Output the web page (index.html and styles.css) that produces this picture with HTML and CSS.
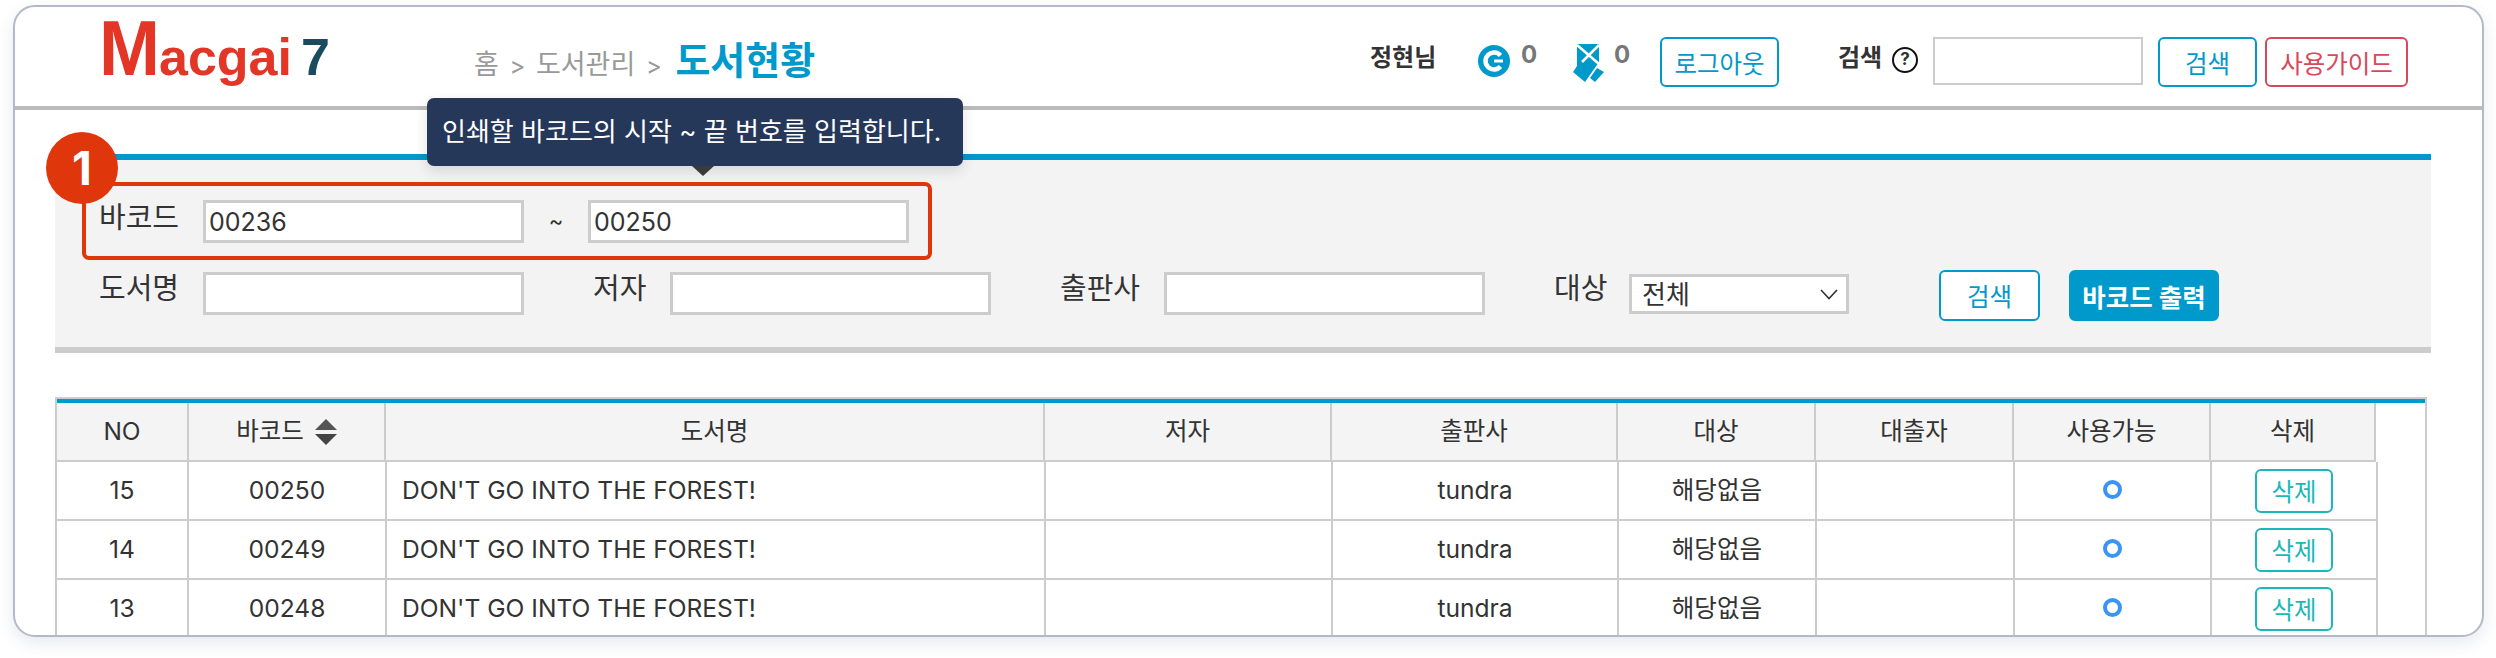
FILE: index.html
```html
<!DOCTYPE html>
<html>
<head>
    <title>도서현황</title>
    <link rel="stylesheet" href="styles.css">
</head>
<body>
    <div class="frame">
        <div class="header">
            <div class="logo"><span class="logo-m">M</span><span class="logo-rest">acgai</span><span class="logo-num">7</span></div>
            <div class="crumb">홈 <span class="gt">&gt;</span> 도서관리 <span class="gt">&gt;</span> <b>도서현황</b></div>
            <div class="user">
                <span class="user-name">정현님</span>
                <svg class="icon-g" width="32" height="32" viewBox="0 0 32 32">
                    <circle cx="16" cy="16" r="16" fill="#0099cc"/>
                    <path d="M22.5 10.5A8.5 8.5 0 1 0 22.5 21.5" fill="none" stroke="#fff" stroke-width="4.5"/>
                    <path d="M16 16H25" stroke="#fff" stroke-width="3"/>
                </svg>
                <span class="point">0</span>
                <svg class="icon-ribbon" width="31" height="38" viewBox="0 0 31 38">
                    <path d="M4 0H26V18L12 38L0 28L4 22Z" fill="#0099cc"/>
                    <path d="M17 34L24 24L31 28L22 38Z" fill="#0099cc"/>
                    <path d="M4 1L26 20M26 1L9 18" stroke="#fff" stroke-width="2.5"/>
                </svg>
                <span class="point">0</span>
                <button class="btn btn-logout">로그아웃</button>
                <span class="search-label">검색</span>
                <span class="help">?</span>
                <input type="text" class="search-input">
                <button class="btn btn-search">검색</button>
                <button class="btn btn-guide">사용가이드</button>
            </div>
        </div>

        <div class="filter">
            <div class="filter-row">
                <label class="lbl lbl-3">바코드</label>
                <input type="text" class="field" value="00236">
                <span class="tilde">~</span>
                <input type="text" class="field" value="00250">
            </div>
            <div class="filter-row filter-row2">
                <label class="lbl lbl-3">도서명</label>
                <input type="text" class="field">
                <label class="lbl lbl-2 lbl-next">저자</label>
                <input type="text" class="field">
                <label class="lbl lbl-3 lbl-next">출판사</label>
                <input type="text" class="field">
                <label class="lbl lbl-target lbl-next">대상</label>
                <select class="target"><option>전체</option></select>
                <button class="btn btn-find">검색</button>
                <button class="btn btn-print">바코드 출력</button>
            </div>
        </div>

        <div class="list">
            <table class="list-head">
                <colgroup>
                    <col class="c1"><col class="c2h"><col class="c3"><col class="c4"><col class="c5"><col class="c6"><col class="c7"><col class="c8"><col class="c9h">
                </colgroup>
                <tr>
                    <th>NO</th>
                    <th>바코드
                        <svg class="sort" width="22" height="26" viewBox="0 0 22 26">
                            <path d="M11 0L22 11H0Z" fill="#555"/>
                            <path d="M11 26L22 15H0Z" fill="#444"/>
                        </svg>
                    </th>
                    <th>도서명</th>
                    <th>저자</th>
                    <th>출판사</th>
                    <th>대상</th>
                    <th>대출자</th>
                    <th>사용가능</th>
                    <th>삭제</th>
                </tr>
            </table>
            <table class="list-body">
                <colgroup>
                    <col class="c1"><col class="c2"><col class="c3"><col class="c4"><col class="c5"><col class="c6"><col class="c7"><col class="c8"><col class="c9">
                </colgroup>
                <tr>
                    <td>15</td><td>00250</td><td class="title">DON'T GO INTO THE FOREST!</td><td></td><td>tundra</td><td>해당없음</td><td></td>
                    <td><span class="ring"></span></td><td class="del"><button class="btn btn-del">삭제</button></td>
                </tr>
                <tr>
                    <td>14</td><td>00249</td><td class="title">DON'T GO INTO THE FOREST!</td><td></td><td>tundra</td><td>해당없음</td><td></td>
                    <td><span class="ring"></span></td><td class="del"><button class="btn btn-del">삭제</button></td>
                </tr>
                <tr>
                    <td>13</td><td>00248</td><td class="title">DON'T GO INTO THE FOREST!</td><td></td><td>tundra</td><td>해당없음</td><td></td>
                    <td><span class="ring"></span></td><td class="del"><button class="btn btn-del">삭제</button></td>
                </tr>
            </table>
        </div>

        <!-- guide annotation on top of the page -->
        <div class="mark-box"></div>
        <div class="mark-num">1</div>
        <div class="tip">인쇄할 바코드의 시작 ~ 끝 번호를 입력합니다.</div>
    </div>
</body>
</html>
```

FILE: styles.css
```css
body {
    font-family: Inter, "Noto Sans CJK KR", sans-serif;
    background: #fff;
    color: #333;
    margin: 0;
    height: 658px;
    overflow: hidden;
}

.frame {
    position: relative;
    width: 2471px;
    height: 632px;
    margin: 5px 0 0 13px;
    box-sizing: border-box;
    border: 2px solid #b4b9ca;
    border-radius: 22px;
    box-shadow: 0 6px 16px rgba(60, 70, 100, 0.12);
    overflow: hidden;
    background: #fff;
}

.btn {
    font-family: Inter, "Noto Sans CJK KR", sans-serif;
    font-size: 24.5px;
    background: #fff;
    border: 2px solid #0099cc;
    border-radius: 6px;
    color: #0099cc;
    padding: 0;
    box-sizing: border-box;
    cursor: pointer;
}

/* header */
.header {
    display: flex;
    align-items: center;
    height: 99px;
    border-bottom: 4px solid #bbb;
}

.logo {
    width: 375px;
    margin-left: 84px;
    flex: none;
    display: flex;
    align-items: baseline;
    font-family: "Liberation Sans", sans-serif;
    font-weight: bold;
    color: #e33626;
    line-height: 1;
    align-self: flex-start;
    margin-top: 3px;
}

.logo-m {
    display: inline-block;
    width: 60px;
    font-size: 77px;
    transform: scaleX(0.95);
    transform-origin: left;
}

.logo-rest {
    font-size: 52px;
}

.logo-num {
    font-size: 52px;
    color: #1a4b5e;
    margin-left: 9px;
}

.crumb {
    font-size: 27px;
    color: #999;
    white-space: nowrap;
    margin-top: 2px;
}

.crumb .gt {
    font-size: 24px;
    margin: 0 3px;
}

.crumb b {
    font-size: 38px;
    color: #0099cc;
    margin-left: 3px;
}

.user {
    position: absolute;
    left: 1355px;
    top: 0;
    display: flex;
    align-items: flex-start;
    height: 99px;
}

.user-name {
    font-size: 24px;
    font-weight: bold;
    margin-top: 33px;
    width: 67px;
    line-height: 35px;
    white-space: nowrap;
}

.icon-g {
    margin: 38px 0 0 41px;
}

.point {
    font-size: 24px;
    font-weight: bold;
    color: #777;
    width: 16px;
    margin: 33px 0 0 11px;
    line-height: 30px;
}

.icon-ribbon {
    margin: 37px 0 0 36px;
}

.icon-ribbon + .point {
    margin-left: 10px;
}

.btn-logout {
    width: 119px;
    height: 50px;
    margin: 30px 0 0 30px;
}

.search-label {
    font-size: 24px;
    font-weight: bold;
    margin: 33px 0 0 59px;
    width: 46px;
    line-height: 35px;
    white-space: nowrap;
}

.help {
    width: 26px;
    height: 26px;
    box-sizing: border-box;
    border: 2.5px solid #111;
    border-radius: 50%;
    margin: 40px 0 0 8px;
    font-size: 17px;
    font-weight: bold;
    line-height: 21px;
    text-align: center;
}

.search-input {
    width: 210px;
    height: 48px;
    box-sizing: border-box;
    border: 2px solid #ccc;
    margin: 30px 0 0 15px;
}

.btn-search {
    width: 99px;
    height: 50px;
    margin: 30px 0 0 15px;
}

.btn-guide {
    width: 143px;
    height: 50px;
    margin: 30px 0 0 8px;
    border-color: #d9485a;
    color: #d9485a;
}

/* search panel */
.filter {
    width: 2376px;
    height: 199px;
    box-sizing: border-box;
    margin: 44px 0 0 40px;
    padding: 40px 0 0 44px;
    background: #f3f3f3;
    border-top: 6px solid #0099cc;
    border-bottom: 6px solid #ccc;
}

.filter-row {
    display: flex;
    align-items: flex-start;
}

.filter-row2 {
    margin-top: 27px;
    height: 51px;
}

.lbl {
    font-size: 29px;
    line-height: 36px;
    flex: none;
    white-space: nowrap;
}

.lbl-3 {
    width: 104px;
}

.lbl-2 {
    width: 77px;
}

.lbl-target {
    width: 75px;
}

.lbl-next {
    margin-left: 69px;
}

.filter-row2 .lbl {
    margin-top: 1px;
}

.field {
    width: 321px;
    height: 43px;
    box-sizing: border-box;
    border: 3px solid #ccc;
    padding: 0 3px;
    font-family: Inter, "Noto Sans CJK KR", sans-serif;
    font-size: 25px;
    color: #333;
    background: #fff;
    flex: none;
}

.filter-row2 .field {
    margin-top: 2px;
}

.tilde {
    width: 64px;
    text-align: center;
    font-size: 22px;
    line-height: 43px;
    flex: none;
}

.target {
    appearance: none;
    width: 220px;
    height: 40px;
    box-sizing: border-box;
    border: 3px solid #ccc;
    border-radius: 0;
    padding-left: 10px;
    margin-top: 4px;
    font-family: Inter, "Noto Sans CJK KR", sans-serif;
    font-size: 26px;
    color: #333;
    background: #fff url("data:image/svg+xml,%3Csvg xmlns='http://www.w3.org/2000/svg' width='18' height='11'%3E%3Cpath d='M1 1L9 9.5L17 1' fill='none' stroke='%23333' stroke-width='1.6'/%3E%3C/svg%3E") no-repeat right 8px center;
}

.btn-find {
    width: 101px;
    height: 51px;
    margin-left: 90px;
}

.btn-print {
    width: 150px;
    height: 51px;
    margin-left: 29px;
    background: #0099cc;
    color: #fff;
    font-size: 25.5px;
    font-weight: bold;
}

/* list */
.list {
    width: 2372px;
    height: 240px;
    box-sizing: border-box;
    margin: 44px 0 0 40px;
    border: 2px solid #ccc;
    border-bottom: none;
}

.list::before {
    content: "";
    display: block;
    height: 4px;
    background: #0099cc;
}

.list table {
    table-layout: fixed;
    border-collapse: separate;
    border-spacing: 0;
}

.list-head {
    width: 2319px;
}

.list-body {
    width: 2321px;
}

.c1 { width: 132px; }
.c2h { width: 197px; }
.c2 { width: 198px; }
.c3 { width: 659px; }
.c4 { width: 287px; }
.c5 { width: 286px; }
.c6 { width: 198px; }
.c7 { width: 198px; }
.c8 { width: 197px; }
.c9h { width: 165px; }
.c9 { width: 166px; }

.list th {
    height: 56px;
    padding: 0 0 1px;
    background: #f4f4f4;
    font-size: 24.5px;
    font-weight: normal;
    border-right: 2px solid #ccc;
    border-bottom: 2px solid #ccc;
    box-sizing: content-box;
    line-height: 30px;
}

.sort {
    vertical-align: -5px;
    margin-left: 4px;
}

.list td {
    height: 55px;
    padding: 0 0 2px;
    font-size: 24.6px;
    line-height: 30px;
    text-align: center;
    border-right: 2px solid #ccc;
    border-bottom: 2px solid #ccc;
    box-sizing: content-box;
}

.list td.title {
    text-align: left;
    padding-left: 15px;
}

.list td.del {
    padding: 0;
    height: 57px;
}

.ring {
    display: block;
    width: 19px;
    height: 19px;
    box-sizing: border-box;
    margin: 0 auto;
    border: 4px solid #3a94f5;
    border-radius: 50%;
}

.btn-del {
    display: block;
    width: 78px;
    height: 44px;
    margin: 0 auto;
    border-color: #1ab8b8;
    color: #1ab8b8;
}

/* annotation */
.mark-box {
    position: absolute;
    left: 67px;
    top: 175px;
    width: 850px;
    height: 78px;
    box-sizing: border-box;
    border: 4px solid #e0360b;
    border-radius: 7px;
}

.mark-num {
    position: absolute;
    left: 31px;
    top: 125px;
    width: 72px;
    height: 72px;
    border-radius: 50%;
    background: #e0360b;
    color: #fff;
    font-size: 46px;
    font-weight: bold;
    line-height: 72px;
    text-align: center;
}

.tip {
    position: absolute;
    left: 412px;
    top: 91px;
    width: 536px;
    height: 68px;
    box-sizing: border-box;
    padding-left: 15px;
    background: #26385a;
    border-radius: 7px;
    color: #fff;
    font-size: 26px;
    line-height: 68px;
    white-space: nowrap;
    box-shadow: 0 5px 14px rgba(0, 0, 0, 0.12);
}

.tip::after {
    content: "";
    position: absolute;
    left: 265px;
    top: 68px;
    border-left: 11px solid transparent;
    border-right: 11px solid transparent;
    border-top: 10px solid #3a3a3a;
}
```
